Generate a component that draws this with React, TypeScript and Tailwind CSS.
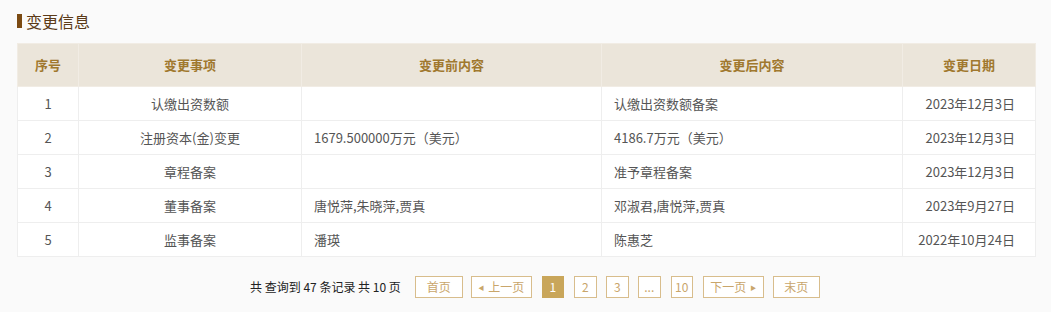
const rows = [
  { no: 1, item: "认缴出资数额", before: "", after: "认缴出资数额备案", date: "2023年12月3日" },
  { no: 2, item: "注册资本(金)变更", before: "1679.500000万元（美元）", after: "4186.7万元（美元）", date: "2023年12月3日" },
  { no: 3, item: "章程备案", before: "", after: "准予章程备案", date: "2023年12月3日" },
  { no: 4, item: "董事备案", before: "唐悦萍,朱晓萍,贾真", after: "邓淑君,唐悦萍,贾真", date: "2023年9月27日" },
  { no: 5, item: "监事备案", before: "潘瑛", after: "陈惠芝", date: "2022年10月24日" },
];

const pageBtn =
  "h-[22px] border border-[#d8bd8c] text-[#c9a66b] text-[12px] flex items-center justify-center bg-white";

export default function App() {
  return (
    <div className="w-[1051px] h-[312px] bg-[#fafafa] font-['Microsoft_YaHei','Noto_Sans_CJK_SC',sans-serif] pl-[17px] pr-[16px] pt-[11px]">
      <div className="flex items-center h-[20px]">
        <span className="w-[5px] h-[14px] bg-[#7b4a12] mr-[4px]" />
        <span className="text-[16px] text-[#5b3a18] leading-[20px]">变更信息</span>
      </div>

      <table className="mt-[12px] w-[1018px] border-collapse text-[13px] text-[#555] table-fixed">
        <colgroup>
          <col className="w-[61px]" />
          <col className="w-[223px]" />
          <col className="w-[300px]" />
          <col className="w-[301px]" />
          <col className="w-[133px]" />
        </colgroup>
        <thead>
          <tr className="bg-[#ebe5da] h-[43px] text-[#a0782e]">
            <th className="border border-[#f1ece4] font-bold">序号</th>
            <th className="border border-[#f1ece4] font-bold">变更事项</th>
            <th className="border border-[#f1ece4] font-bold">变更前内容</th>
            <th className="border border-[#f1ece4] font-bold">变更后内容</th>
            <th className="border border-[#f1ece4] font-bold">变更日期</th>
          </tr>
        </thead>
        <tbody className="bg-white">
          {rows.map((r) => (
            <tr key={r.no} className="h-[34px]">
              <td className="border border-[#eeeeee] text-center">{r.no}</td>
              <td className="border border-[#eeeeee] text-center">{r.item}</td>
              <td className="border border-[#eeeeee] pl-[12px]">{r.before}</td>
              <td className="border border-[#eeeeee] pl-[12px]">{r.after}</td>
              <td className="border border-[#eeeeee] text-right pr-[20px]">{r.date}</td>
            </tr>
          ))}
        </tbody>
      </table>

      <div className="mt-[19px] flex items-center pl-[233px] text-[12px]">
        <span className="text-[#222] mr-[14px]">共 查询到 47 条记录 共 10 页</span>
        <div className={`${pageBtn} w-[48px]`}>首页</div>
        <div className={`${pageBtn} w-[61px] ml-[8px] gap-[4px]`}>
          <span className="text-[6px]">◀</span>上一页
        </div>
        <div className="h-[22px] w-[22px] ml-[10px] bg-[#c9a65a] text-white text-[12px] flex items-center justify-center">1</div>
        <div className={`${pageBtn} w-[23px] ml-[10px]`}>2</div>
        <div className={`${pageBtn} w-[23px] ml-[9px]`}>3</div>
        <div className={`${pageBtn} w-[23px] ml-[9px]`}>...</div>
        <div className={`${pageBtn} w-[22px] ml-[10px]`}>10</div>
        <div className={`${pageBtn} w-[61px] ml-[10px] gap-[4px]`}>
          下一页<span className="text-[6px]">▶</span>
        </div>
        <div className={`${pageBtn} w-[47px] ml-[9px]`}>末页</div>
      </div>
    </div>
  );
}
